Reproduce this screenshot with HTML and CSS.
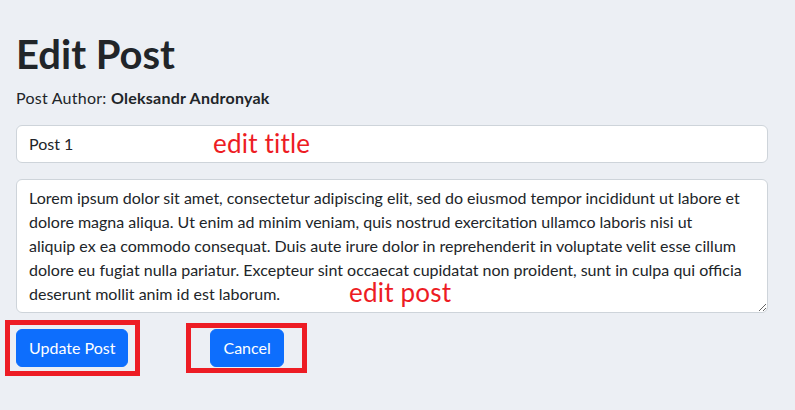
FILE: index.html
```html
<!DOCTYPE html>
<html lang="en">
<head>
<meta charset="utf-8">
<title>Edit Post</title>
<link rel="stylesheet" href="styles.css">
</head>
<body>
<main class="page">
  <h1 class="title">Edit Post</h1>
  <p class="author">Post Author: <strong>Oleksandr Andronyak</strong></p>
  <form class="form">
    <div class="field">
      <input class="control" type="text" value="Post 1">
      <span class="note note-title">edit title</span>
    </div>
    <div class="field">
      <textarea class="control area" rows="5">Lorem ipsum dolor sit amet, consectetur adipiscing elit, sed do eiusmod tempor incididunt ut labore et
dolore magna aliqua. Ut enim ad minim veniam, quis nostrud exercitation ullamco laboris nisi ut
aliquip ex ea commodo consequat. Duis aute irure dolor in reprehenderit in voluptate velit esse cillum
dolore eu fugiat nulla pariatur. Excepteur sint occaecat cupidatat non proident, sunt in culpa qui officia
deserunt mollit anim id est laborum.</textarea>
      <span class="note note-post">edit post</span>
    </div>
    <div class="actions">
      <span class="mark mark-update"><button type="button" class="btn">Update Post</button></span>
      <span class="mark mark-cancel"><button type="button" class="btn">Cancel</button></span>
    </div>
  </form>
</main>
</body>
</html>
```
FILE: styles.css
```css
* { box-sizing: border-box; }
html, body { margin: 0; }
body {
  background: #eceff4;
  color: #212529;
  font-family: Lato, "Noto Sans", sans-serif;
  font-size: 16px;
  line-height: 1.5;
  width: 795px;
  height: 410px;
  overflow: hidden;
}
.page {
  padding: 30px 27px 0 16px;
}
.title {
  margin: 0 0 8px;
  font-size: 40px;
  line-height: 1.2;
  font-weight: 700;
}
.author {
  margin: 0 0 15px;
  font-size: 16px;
  letter-spacing: 0.25px;
}
.author strong { font-weight: 700; }
.field {
  position: relative;
  margin-bottom: 16px;
}
.control {
  display: block;
  width: 100%;
  padding: 6px 12px;
  font-family: inherit;
  font-size: 16px;
  line-height: 24px;
  color: #212529;
  background: #fff;
  border: 1px solid #ced4da;
  border-radius: 6px;
  outline: none;
}
.area {
  resize: vertical;
  height: 134px;
  padding-right: 4px;
  overflow: hidden;
}
.note {
  position: absolute;
  color: #ed1c24;
  font-size: 26px;
  line-height: 1;
  letter-spacing: 0.2px;
  pointer-events: none;
}
.note-title { left: 197px; top: 5px; }
.note-post { left: 333px; top: 100px; }
.actions {
  display: flex;
  align-items: center;
  gap: 82px;
  position: relative;
}
.btn {
  font-family: inherit;
  font-size: 16px;
  line-height: 24px;
  padding: 6px 12px;
  color: #fff;
  background: #0d6efd;
  border: 1px solid #0d6efd;
  border-radius: 6px;
}
.mark { position: relative; display: inline-block; }
.mark::after {
  content: "";
  position: absolute;
  border: 5px solid #ed1c24;
  pointer-events: none;
}
.mark-update::after { left: -11px; top: -9px; right: -12px; bottom: -9px; }
.mark-cancel::after { left: -24px; top: -6px; right: -23px; bottom: -6px; }
```
